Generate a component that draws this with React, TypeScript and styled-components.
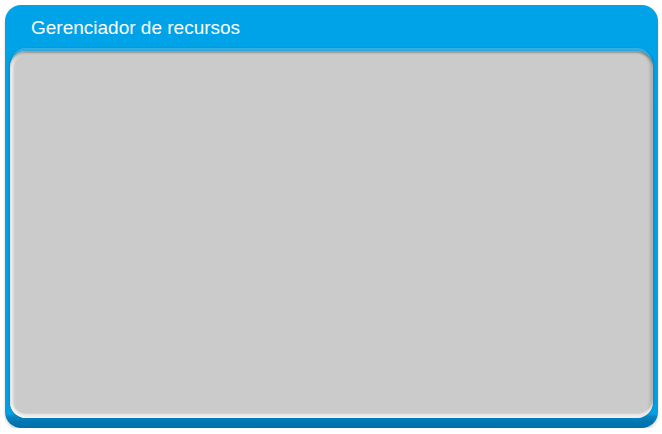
import React from 'react'
import styled, { createGlobalStyle } from 'styled-components'

const GlobalStyle = createGlobalStyle`
  html, body {
    margin: 0;
    padding: 0;
    background: #ffffff;
    font-family: "Liberation Sans", Arial, sans-serif;
  }
`

const Page = styled.div`
  padding: 5px 0 0 5px;
`

const Frame = styled.div`
  width: 653px;
  height: 423px;
  display: flex;
  flex-direction: column;
  box-sizing: border-box;
  padding: 0 5px 10px 5px;
  border-radius: 16px;
  background: linear-gradient(
    to bottom,
    #00a3e8 0,
    #00a0e4 calc(100% - 14px),
    #0a86c4 calc(100% - 12px),
    #0076b2 calc(100% - 6px),
    #006fa8 100%
  );
  box-shadow: 0 2px 3px rgba(0, 0, 0, 0.18);
`

const Header = styled.div`
  height: 40px;
  flex-shrink: 0;
  display: flex;
  align-items: center;
  padding: 5px 0 0 21px;
  box-sizing: border-box;
  color: #ffffff;
  font-size: 19px;
`

const Content = styled.div`
  flex: 1;
  margin-top: 6px;
  border-radius: 16px;
  background: #cbcbcb;
  box-shadow:
    0 -4px 0 -1px rgba(90, 200, 245, 0.55),
    0 -2px 3px rgba(0, 70, 110, 0.45),
    inset 0 2px 2px rgba(0, 0, 0, 0.28),
    inset 3px 0 3px rgba(255, 255, 255, 0.75),
    inset 0 -4px 2px rgba(240, 240, 240, 0.9),
    inset -3px 0 3px rgba(0, 0, 0, 0.14);
`

export default function App() {
  return (
    <Page>
      <GlobalStyle />
      <Frame>
        <Header>Gerenciador de recursos</Header>
        <Content />
      </Frame>
    </Page>
  )
}
